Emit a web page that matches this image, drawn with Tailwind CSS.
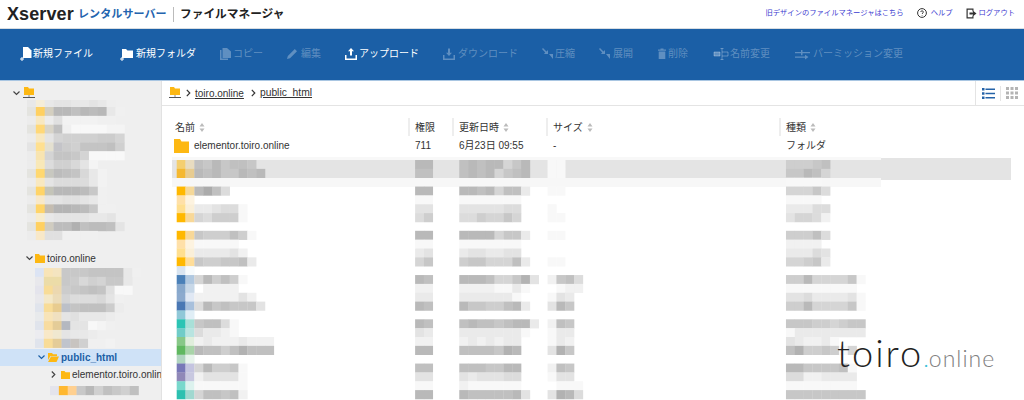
<!doctype html>
<html lang="ja">
<head>
<meta charset="UTF-8" />
<title>ファイルマネージャ</title>
<script src="https://cdn.jsdelivr.net/npm/@tailwindcss/browser@4"></script>
</head>
<body class="w-[1024px] h-[400px] overflow-hidden bg-white flex flex-col text-[#333] font-['Liberation_Sans','Noto_Sans_CJK_JP',sans-serif]">

  <!-- header -->
  <header class="h-[29px] shrink-0 flex items-center pl-[7px] pr-[9px] border-b border-[#d8dde2]">
    <span class="w-[67px] text-[18px] leading-none font-bold text-[#222] tracking-[0.1px]">Xserver</span>
    <span class="ml-[4px] w-[95px] text-[11px] font-bold text-[#2464ae] tracking-[0.1px]">レンタルサーバー</span>
    <span class="h-[15px] w-px bg-[#bbb]"></span>
    <span class="ml-[6px] text-[11.7px] font-bold text-[#222]">ファイルマネージャ</span>
    <div class="ml-auto mb-[2px] flex items-center text-[7.3px] text-[#3a3ad0]">
      <span>旧デザインのファイルマネージャはこちら</span>
      <svg class="ml-[13px] text-[#333]" width="10" height="10" viewBox="0 0 10 10" fill="none" stroke="currentColor"><circle cx="5" cy="5" r="4.4"/><path d="M3.7 4c0-1.6 2.7-1.6 2.7 0 0 1-1.3 1-1.3 2M5.1 7.3v.6" stroke-width=".9"/></svg>
      <span class="ml-[4px]">ヘルプ</span>
      <svg class="ml-[13px] text-[#333]" width="11" height="11" viewBox="0 0 11 11" fill="currentColor"><path d="M.5.5h7v3H6.4V1.7H1.7v7.6h4.7V7.5h1.1v3h-7z"/><path d="M3.5 4.500h3.500V2.800l3.500 2.700L7 8.200V6.500H3.500z"/></svg>
      <span class="ml-[2px]">ログアウト</span>
    </div>
  </header>

  <!-- toolbar -->
  <nav class="h-[52px] shrink-0 pl-[20px] pb-[2px] flex items-center bg-[#1b5fa6] border-b border-[#a9c6e2] text-[10px] text-white">
    <div class="w-[100px] flex items-center gap-[1px]">
      <svg width="12" height="14" viewBox="0 0 12 14" fill="currentColor"><path d="M3 0h5l3.500 3.500V11H3z"/><path d="M1.500 10v1.500H0v1h1.500V14h1v-1.500H4v-1H2.500V10z"/></svg>
      <span>新規ファイル</span>
    </div>
    <div class="w-[100px] flex items-center gap-[3px]">
      <svg width="13" height="14" viewBox="0 0 13 14" fill="currentColor"><path d="M2 2h4l1.500 1.500H13V11H2z"/><path d="M1.500 10v1.500H0v1h1.500V14h1v-1.500H4v-1H2.500V10z"/></svg>
      <span>新規フォルダ</span>
    </div>
    <div class="w-[67px] flex items-center gap-[2px] text-white/30">
      <svg width="11" height="12" viewBox="0 0 11 12" fill="currentColor"><path d="M0 2h1.500v8.500H8V12H0z"/><path d="M2.500 0H7l4 3.500V10H2.500z"/></svg>
      <span>コピー</span>
    </div>
    <div class="w-[58px] flex items-center gap-[3px] text-white/30">
      <svg width="11" height="11" viewBox="0 0 11 11" fill="currentColor"><path d="M0 11l.8-3L7.800 1l2.200 2.200-7 7z"/></svg>
      <span>編集</span>
    </div>
    <div class="w-[98px] flex items-center gap-[2px]">
      <svg width="12" height="12" viewBox="0 0 12 12" fill="currentColor"><path d="M6 0l3 3.200H7v4.300H5V3.200H3z"/><path d="M0 7h1.500v3.500h9V7H12v5H0z"/></svg>
      <span>アップロード</span>
    </div>
    <div class="w-[99px] flex items-center gap-[3px] text-white/30">
      <svg width="12" height="12" viewBox="0 0 12 12" fill="currentColor"><path d="M6 8L3 4.800h2V.5h2v4.300h2z"/><path d="M0 7h1.500v3.500h9V7H12v5H0z"/></svg>
      <span>ダウンロード</span>
    </div>
    <div class="w-[57px] flex items-center gap-[2px] text-white/30">
      <svg width="11" height="11" viewBox="0 0 11 11" fill="currentColor"><path d="M0 1l1-1 3.500 3.500L6 2v4H2l1.200-1.500zM7 6h4v5z"/></svg>
      <span>圧縮</span>
    </div>
    <div class="w-[59px] flex items-center gap-[3px] text-white/30">
      <svg width="11" height="11" viewBox="0 0 11 11" fill="currentColor"><path d="M0 1l1-1 3.500 3.500L6 2v4H2l1.200-1.500zM7 6h4v5z"/></svg>
      <span>展開</span>
    </div>
    <div class="w-[55px] flex items-center gap-[2px] text-white/30">
      <svg width="8" height="11" viewBox="0 0 8 11" fill="currentColor"><path d="M0 1.500h2.500V.5h3v1H8v1.200H0zM.7 3.500h6.600V11H.7z"/></svg>
      <span>削除</span>
    </div>
    <div class="w-[82px] flex items-center gap-[1px] text-white/30">
      <svg width="16" height="12" viewBox="0 0 16 12" fill="none" stroke="currentColor"><path d="M1 4h6v4H1z" fill="currentColor"/><path d="M9 4h6v4H9M9 .5v11M7.500.5h3M7.500 11.500h3"/></svg>
      <span>名前変更</span>
    </div>
    <div class="flex items-center gap-[3px] text-white/30">
      <svg width="15" height="12" viewBox="0 0 15 12" fill="currentColor"><path d="M0 4h6V2h1.500v2H15v1.200H7.500v2H6v-2H0zM0 8.500h10V6.800l3.500 2.300L10 11.400V9.700H0z"/></svg>
      <span>パーミッション変更</span>
    </div>
  </nav>

  <div class="flex-1 flex min-h-0">
    <!-- folder tree -->
    <aside class="w-[162px] shrink-0 bg-[#efefef] border-r border-[#e2e2e2] flex flex-col overflow-hidden text-[10px]">
      <div class="h-[19px] shrink-0 flex items-center pl-[13px] pt-[5px] gap-[3px]">
        <svg width="7" height="5" viewBox="0 0 7 5" fill="none" stroke="#444" stroke-width="1.200"><path d="M.5.500l3 3 3-3"/></svg>
        <svg width="12" height="12" viewBox="0 0 12 12"><path d="M1 0h4l1 1.500h5V8H1z" fill="#fdb813"/><path d="M0 10.500h12" stroke="#555"/><path d="M6 8v2" stroke="#888"/></svg>
      </div>
      <svg id="tree-a" class="block shrink-0 blur-[0.7px]" width="161" height="149" viewBox="0 100 161 149"></svg>
      <div class="h-[19px] shrink-0 flex items-center pl-[26px]">
        <svg width="7" height="5" viewBox="0 0 7 5" fill="none" stroke="#444" stroke-width="1.200"><path d="M.5.500l3 3 3-3"/></svg>
        <svg class="ml-[2px]" width="10" height="9" viewBox="0 0 10 9" fill="#fdb813"><path d="M0 0h4l1 1.500h5V9H0z"/></svg>
        <span class="ml-[2px]">toiro.online</span>
      </div>
      <svg id="tree-b" class="block shrink-0 blur-[0.7px]" width="161" height="81" viewBox="0 268 161 81"></svg>
      <div class="h-[17px] shrink-0 flex items-center pl-[38px] bg-[#cfe2f7] font-bold text-[#1b5fa6]">
        <svg width="7" height="5" viewBox="0 0 7 5" fill="none" stroke="#1b5fa6" stroke-width="1.200"><path d="M.5.500l3 3 3-3"/></svg>
        <svg class="ml-[3px]" width="11" height="9" viewBox="0 0 11 9" fill="#fdb813"><path d="M0 0h4l1 1.200h4V3H2.500L0 7z"/><path d="M3 3.500h8L8.500 9H0z"/></svg>
        <span class="ml-[2px]">public_html</span>
      </div>
      <div class="h-[17px] shrink-0 flex items-center pl-[51px] whitespace-nowrap">
        <svg class="shrink-0" width="5" height="7" viewBox="0 0 5 7" fill="none" stroke="#444" stroke-width="1.200"><path d="M.8.500l3 3-3 3"/></svg>
        <svg class="ml-[5px] shrink-0" width="9" height="8" viewBox="0 0 9 8" fill="#fdb813"><path d="M0 0h3.500l1 1.300H9V8H0z"/></svg>
        <span class="ml-[2px]">elementor.toiro.online</span>
      </div>
      <svg id="tree-c" class="block shrink-0 blur-[0.7px]" width="161" height="17" viewBox="0 383 161 17"></svg>
    </aside>

    <main class="relative flex-1 min-w-0 flex flex-col">
      <!-- breadcrumb -->
      <div class="h-[25px] shrink-0 flex items-center border-b border-[#e4e4e4] text-[10px] pl-[7px]">
        <svg width="12" height="12" viewBox="0 0 12 12"><path d="M1 0h4l1 1.500h5V8H1z" fill="#fdb813"/><path d="M0 10.500h12" stroke="#555"/><path d="M6 8v2" stroke="#888"/></svg>
        <svg class="ml-[5px]" width="5" height="8" viewBox="0 0 5 8" fill="none" stroke="#333" stroke-width="1.200"><path d="M.8.800l3 3.200-3 3.200"/></svg>
        <a class="ml-[4px] underline">toiro.online</a>
        <svg class="ml-[7px]" width="5" height="8" viewBox="0 0 5 8" fill="none" stroke="#333" stroke-width="1.200"><path d="M.8.800l3 3.200-3 3.200"/></svg>
        <a class="ml-[4px] underline text-[10.3px]">public_html</a>
        <div class="ml-auto self-stretch w-[49px] flex items-center border-l border-[#e4e4e4]">
          <svg class="ml-[6px]" width="13" height="11" viewBox="0 0 13 11" fill="#2563a8"><path d="M0 0h2.500v2.500H0zM3.500.5H13V2H3.500zM0 4.200h2.500v2.500H0zM3.500 4.700H13v1.500H3.500zM0 8.400h2.500v2.500H0zM3.500 8.900H13v1.500H3.500z"/></svg>
          <span class="ml-[5px] h-[15px] w-px bg-[#e4e4e4]"></span>
          <svg class="ml-[5px]" width="12" height="12" viewBox="0 0 12 12" fill="#b4b4b4"><path d="M0 0h3v3H0zM4.500 0h3v3h-3zM9 0h3v3H9zM0 4.500h3v3H0zM4.500 4.500h3v3h-3zM9 4.500h3v3H9zM0 9h3v3H0zM4.500 9h3v3h-3zM9 9h3v3H9z"/></svg>
        </div>
      </div>

      <!-- file list -->
      <div class="pt-[12px] pb-[2px] text-[10px] grid grid-cols-[246px_44px_94px_233px_1fr] grid-rows-[18px_19px] items-center">
        <div class="pl-[13px] flex items-center gap-[4px]">名前<svg width="6" height="9" viewBox="0 0 6 9" fill="#bbb"><path d="M3 0l2.500 3.500h-5zM3 9L.5 5.500h5z"/></svg></div>
        <div class="h-full pl-[5px] flex items-center border-l-2 border-[#eee]">権限</div>
        <div class="h-full pl-[5px] flex items-center gap-[4px] border-l-2 border-[#eee]">更新日時<svg width="6" height="9" viewBox="0 0 6 9" fill="#bbb"><path d="M3 0l2.500 3.500h-5zM3 9L.5 5.500h5z"/></svg></div>
        <div class="h-full pl-[5px] flex items-center gap-[4px] border-l-2 border-[#eee]">サイズ<svg width="6" height="9" viewBox="0 0 6 9" fill="#bbb"><path d="M3 0l2.500 3.500h-5zM3 9L.5 5.500h5z"/></svg></div>
        <div class="h-full pl-[5px] flex items-center gap-[4px] border-l-2 border-[#eee]">種類<svg width="6" height="9" viewBox="0 0 6 9" fill="#bbb"><path d="M3 0l2.500 3.500h-5zM3 9L.5 5.500h5z"/></svg></div>

        <div class="pl-[12px] flex items-center gap-[5px]">
          <svg width="15" height="14" viewBox="0 0 15 14" fill="#fdb813"><path d="M0 0h6l1.500 2.500H15V14H0z"/></svg>
          <span>elementor.toiro.online</span>
        </div>
        <div class="pl-[7px]">711</div>
        <div class="pl-[7px]">6月23日 09:55</div>
        <div class="pl-[7px]">-</div>
        <div class="pl-[7px]">フォルダ</div>
      </div>
      <svg id="rows" class="block blur-[0.7px]" width="862" height="243" viewBox="162 157 862 243"></svg>

      <!-- watermark -->
      <div class="absolute left-[675px] top-[252px] flex items-baseline whitespace-nowrap font-['Lato',sans-serif] font-light leading-none">
        <span class="text-[38px] text-[#222] tracking-[2px]">toiro</span>
        <span class="text-[24px] text-[#3cc0d8]">.</span>
        <span class="text-[23px] text-[#808080] tracking-[1px]">online</span>
      </div>
    </main>
  </div>

  <script>
    // mosaic cells of the blurred rows
    const STEP = 8.85
    function cell(svg, x, y, w, h, fill) {
      svg.innerHTML += `<rect x="${x}" y="${y}" width="${w}" height="${h}" fill="${fill}"/>`
    }
    function hexRow(svg, x, y, colors) {
      colors.split(' ').forEach((c, i) => {
        if (c !== '-') cell(svg, x + i * STEP, y, STEP + 0.3, STEP + 0.3, '#' + c)
      })
    }
    function grayRow(svg, col, y, digits) {
      const x0 = 176.7 + col * 8.83
      ;[...digits].forEach((c, i) => {
        const d = parseInt(c, 16)
        const g = (255 - d * 7).toString(16).padStart(2, '0')
        if (d) cell(svg, x0 + i * 8.83, y, 9.1, STEP + 0.3, '#' + g + g + g)
      })
    }

    const treeA = [
      'e8e8e8 f5edd8 e8e8e8 e4e4e4 e4e4e4 e8e8e8 e8e8e8 e4e4e4 e8e8e8 eeeeee',
      'e4e4e0 ffd060 d4cfc0 b8b8b8 b8b8b8 c0c0c0 b8b8b8 bcbcbc b8b8b8 e8e8e8 f0f0f0',
      'ececec f8e8c0 ececec e0e0e0 f2f2f2 f2f2f2 f2f2f2 f2f2f2 f0f0f0 f0f0f0',
      'e4e4e0 ffd878 d8d4c8 c0c0c0 f0f0f0 f8f8f8 f8f8f8 f8f8f8 f8f8f8 f4f4f4 f4f4f4',
      'ececec f8e8c0 e4e4e4 d4d4d4 d0d0d0 d0d0d0 d0d0d0 d0d0d0 cccccc cccccc d4d4d4',
      'e4e4e4 ffe090 e4e0d0 c4c4c8 cccccc d0d0d0 c4c4c4 c4c4c4 c4c4c4 c0c0c0 d0d0d0',
      'ececec f8e4b0 d4d4d4 c4c4c4 c4c4c4 c8c8c8 d4d4d4 f8f8f8 f8f8f8 f8f8f8 f8f8f8',
      'ececec f8e8b8 dcdcdc d0d0d0 d0d0d0 d8d8d8 e4e4e4 f4f4f4',
      'e4e4e0 ffd870 c8c8c0 bcbcbc c0c0c0 c4c4c4 d8d8d8 e8e8e8 f2f2f2',
      'ececec f8e8c0 e4e4e4 dcdcdc dcdcdc dcdcdc dcdcdc e8e8e8 f2f2f2',
      'e4e4e0 ffd468 c4c4b8 b8b8b8 b8b8b8 b8b8b8 bcbcbc c8c8c8 f0f0f0',
      'ececec f8e8c8 e4e4e4 e4e4e4 e0e0e0 e0e0e0 e4e4e4 e8e8e8 f0f0f0',
      'e4e4e0 ffd468 c4bcb0 b4b4b4 b4b4b4 b8b8b8 bcbcbc c8c8c8 f0f0f0 f0f0f0',
      'ececec f8eccc e8e8e8 e4e4e4 e4e4e4 e4e4e4 e4e4e4 e8e8e8 e8e8e8 e4e4e4',
      'e4e4e0 ffd060 d0ccc0 bcbcbc bcbcbc b0b0b0 c0c0c0 bcbcbc bcbcbc c0c0c0 e4e4e4',
      'ececec f8e8c8 e0e0e0 e0e0e0 f0f0f0 f0f0f0 f0f0f0 f0f0f0'
    ]
    const treeB = [
      'dce4f4 f8e4b8 f4e4c0 c8c8c8 c8c8c8 c8c8c8 c4c4c4 c4c4c4 c4c4c4 c4c4c4 e8e8e8 f0f0f0',
      'e8e8ec ecdca8 ecdca8 c8c8c8 cccccc d8d8d8 d0d0d0 d4d4d4 c8c8c8 c8c8c8 e8e8e8',
      'e4e4ec f8dc98 ecd8b0 cccccc c8c8c8 c4c4c4 c0c0c0 c4c4c4 e0e0e0 f8f8f8 f8f8f8',
      'e8e8ec f4e8c8 ecdcb8 d4d4d4 dcdcdc dcdcdc dcdcdc d8d8d8 e4e4e4 f0f0f0',
      'e0e4ec f8dc98 e8cc90 bcc0c8 c4c4c4 c0c0c0 c0c0c0 c0c0c0 cccccc ececec',
      'e8eaec f8e4b8 f0e0c0 e4e4e4 e0e0e0 e8e8e8 e8e8e8 e8e8e8 ececec',
      'e0e4ec f8dca0 e4cc98 b4b8c0 e4e4e4 e4e4e4 f8f8f8 f4f4f4 f0f0f0',
      'ececf0 f8e8c8 f0e8d0 e4e4e4 e8e8e8 e8e8e8 ececec',
      'e0e4ec f8dc98 e4cc98 c0c4cc c8c4c0 d0d0d0 f0f0f0 f0f0f0 f2f2f2'
    ]
    const a = document.getElementById('tree-a')
    treeA.forEach((r, i) => hexRow(a, 27, 98.15 + i * STEP, r))
    const b = document.getElementById('tree-b')
    treeB.forEach((r, i) => hexRow(b, 35, 268 + i * STEP, r))
    const c = document.getElementById('tree-c')
    hexRow(c, 50, 386, 'e4e4ec ffb830 ffd090 c8c8c8 b8b8b8 d0d0d0 c0c0c0 c8c8c8 d0d0d0 c0c0c0')

    const rows = document.getElementById('rows')
    // highlighted row
    cell(rows, 172, 157, 709, 3, '#f8f8f8')
    cell(rows, 172, 160, 709, 18, '#e4e4e4')
    cell(rows, 172, 178, 709, 9, '#f7f7f7')
    cell(rows, 881, 158, 130, 22, '#e4e4e4')
    // row, two folder cells, name, permission, date, size, type
    const data = [
      [0, 'f4cf70', 'e8dcc0', '98a8998', 'aa', '9a9aa68a', '11', '77789'],
      [1, 'f5b830', 'e8cc90', 'a9a88a9a', '99', '9a9a689a', '11', '88a96'],
      [2, '', '', '', '', '', '', '1111'],
      [3, 'ffb800', 'f5d898', 'ac95', 'aa', 'aa9a6993', '11', '66685'],
      [4, 'ffe0a8', 'fdf3e0', '', '11', '1111111', '', '1111'],
      [5, 'ffdf90', 'faefd8', '334551', '44', '4444455', '1', '33355'],
      [6, 'ffb800', 'f8d898', '657771', '57', '5576686', '11', '46652'],
      [8, 'ffb800', 'f8d898', '8777971', 'aa', 'aaaa6883', '11', '77795'],
      [9, 'ffe0a8', 'fdf3e0', '111110', '11', '1111111', '', '2222'],
      [10, 'ffdf90', 'faefd8', '333342', '34', '3443344', '', '33354'],
      [11, 'ffb800', 'ffdd98', '8778893', '68', '78866693', '11', '66783'],
      [12, 'd8e4f0', 'f6fafc', '', '', '', '', ''],
      [13, '4a80b8', 'b0c8e0', '6a7971', 'a9', 'aaa9668b4', '2895', '77a666681'],
      [14, '88a8cc', 'c8d8e8', '02222', '22', '22221131', '0122', '11111111'],
      [15, '8caace', 'e0e8f4', '2222242', '33', '3333331', '143', '445333341'],
      [16, '4a78b4', 'a8c0dc', '5a898884', 'a9', 'a88779a3', '4a8', '77a666681'],
      [17, '90c8d8', 'e0eef6', '', '', '', '', ''],
      [18, '2cc4b4', 'a8e0d8', '89951', 'a9', '9a9989aa3', '298', '888776788'],
      [19, '70ccc8', 'b8e4e0', '53321', '43', '33333331', '133', '133333333'],
      [20, '88c888', 'e0eedc', '232223222', '22', '2323233', '132', '432231'],
      [21, '60b860', 'a8d4a8', 'a9979b999', 'aa', '99998ba', '4b8', '9b778716'],
      [22, 'b0d4c0', 'e8f4ec', '', '', '', '', ''],
      [23, '7878b8', 'c4c4e0', '6a7781', '99', '99988aa', '298', 'aa888891'],
      [24, '9088b8', 'c8c8e0', '244441', '44', '4344455', '144', '55223333'],
      [25, '78d8cc', 'dcf2ee', '111111', '11', '2111111', '0111', '11111111'],
      [26, '2cc0b0', 'a0d8d0', '699892', 'aa', 'a99999a4', '4ba5', '888888888']
    ]
    data.forEach(([r, l1, l2, name, perm, date, size, type]) => {
      const y = 160 + r * STEP
      if (l1) {
        cell(rows, 176.7, y, 9, STEP + 0.3, '#' + l1)
        cell(rows, 185.5, y, 9, STEP + 0.3, '#' + l2)
      }
      grayRow(rows, 2, y, name)
      grayRow(rows, 27, y, perm)
      grayRow(rows, 32, y, date)
      grayRow(rows, 42, y, size)
      grayRow(rows, 69, y, type)
    })
  </script>
</body>
</html>
